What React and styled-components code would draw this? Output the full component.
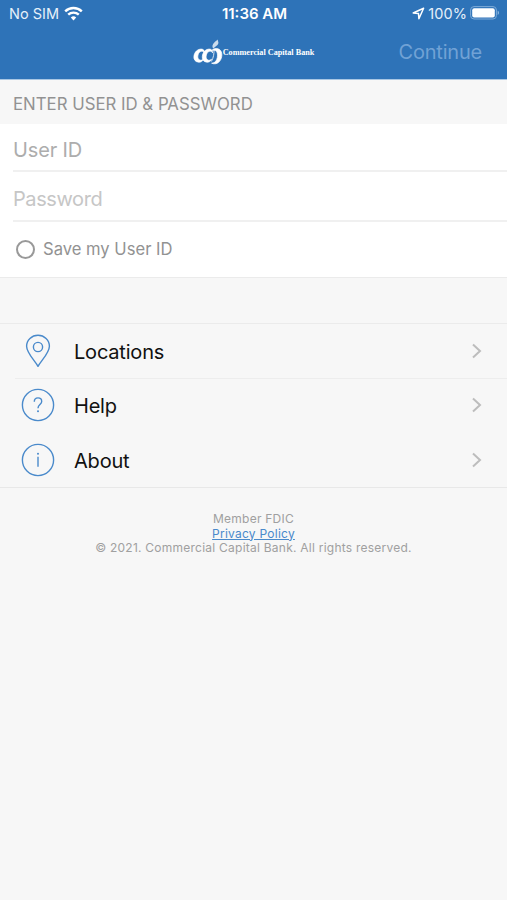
import React, { useState } from "react";
import styled, { createGlobalStyle } from "styled-components";

const GlobalStyle = createGlobalStyle`
  * {
    box-sizing: border-box;
  }
  body {
    margin: 0;
    background-color: #f7f7f7;
    font-family: Inter, "Liberation Sans", sans-serif;
  }
`;

const PinIcon = () => (
  <svg width="34" height="34" viewBox="0 0 34 34" fill="none" stroke="#4a8acb" strokeWidth="1.4">
    <path d="M17 32.3C14 27 5.6 18.8 5.6 12.2a11.4 11 0 0 1 22.8 0C28.4 18.8 20 27 17 32.3Z" strokeLinejoin="round" />
    <circle cx="17" cy="13" r="4.6" />
  </svg>
);

const HelpIcon = () => (
  <svg width="34" height="34" viewBox="0 0 34 34" fill="none" stroke="#4a8acb" strokeWidth="1.4">
    <circle cx="17" cy="17" r="15.6" />
    <path d="M13.3 13.8c0-2.4 1.5-3.9 3.7-3.9s3.7 1.4 3.7 3.5c0 3.1-3.7 3.3-3.7 6.8" />
    <circle cx="17" cy="23.2" r="1" fill="#4a8acb" stroke="none" />
  </svg>
);

const InfoIcon = () => (
  <svg width="34" height="34" viewBox="0 0 34 34" fill="none" stroke="#4a8acb" strokeWidth="1.4">
    <circle cx="17" cy="17" r="15.6" />
    <path d="M17 13.8v9.9" />
    <circle cx="17" cy="10.7" r="1" fill="#4a8acb" stroke="none" />
  </svg>
);

const WifiIcon = () => (
  <svg width="19" height="15" viewBox="0 0 19 15" fill="none" stroke="#fff" strokeWidth="2.4">
    <path d="M1.2 5.4a12 12 0 0 1 16.6 0" />
    <path d="M4.2 8.7a7.7 7.7 0 0 1 10.6 0" />
    <path d="M9.5 14.4l-2.7-2.8a3.9 3.9 0 0 1 5.4 0Z" fill="#fff" stroke="none" />
  </svg>
);

const ArrowIcon = () => (
  <svg width="13" height="13" viewBox="0 0 13 13" fill="none" stroke="#fff" strokeWidth="1.5">
    <path d="M11.6 1.2L1.2 6l5.3.6.4 5.2Z" strokeLinejoin="round" />
  </svg>
);

const BatteryIcon = () => (
  <svg width="30" height="14" viewBox="0 0 30 14">
    <rect x="0.6" y="0.6" width="25.8" height="12.4" rx="3.4" fill="none" stroke="#7eabd8" />
    <rect x="2.2" y="2.2" width="22.6" height="9.2" rx="2" fill="#fff" />
    <path d="M27.7 4.8c1.7.5 1.7 3.6 0 4.1Z" fill="#8fb8e0" />
  </svg>
);

const LogoMark = () => (
  <svg width="30" height="26" viewBox="0 0 30 26" fill="#fff">
    <g stroke="#fff" strokeWidth="0.7">
      <path d="M11.5 14.2c-.4-1.600-1.700-2.300-3.300-1.900-3.200.7-4.500 6.200-2.300 8.300 1.300 1.200 3.400.6 4.700-.5-.8 2-2.600 3.200-4.800 3.100C2.500 23 .6 20.600.9 17.500 1.300 13 4.700 10 8.300 10.100c2 .1 3.500 1.300 3.200 4.100Z" />
      <path d="M19.500 13.900c-.4-1.500-1.500-1.900-2.900-1.600-3.200.7-4.600 6.200-2.400 8.300 1.200 1.200 3 .7 4.300-.4-.7 2-2.300 3.100-4.400 3-3.300-.2-5.100-2.600-4.800-5.700.4-4.500 3.600-7.500 7.100-7.400 2 .1 3.300 1.300 3.100 3.800Z" />
      <path d="M19 11.300c2.200-2.300 6.400-2.400 8.500.2 2.500 3.200 1.300 9-1.800 11.700-1.900 1.700-4.700 2.100-7.100 1 2.600-.2 4.200-1.400 5.100-3.600 1.100-2.800 1.200-6.500-.2-8.200-1-1.200-2.900-1.200-4.500-1.100Z" />
    </g>
    <path d="M21 10.500c.2 4-.5 8.200-2.600 12" fill="none" stroke="#fff" strokeWidth="0.8" />
    <path d="M20.3 9.600c-2.200-3.200.3-6 4.500-9.100-.3 1.700 1.100 2.400.5 4-.7 2.200-3.200 3-5 5.100Z" fillOpacity="0.75" />
  </svg>
);

const Chevron = () => (
  <svg width="12" height="16" viewBox="0 0 12 16" fill="none" stroke="#bdbdbd" strokeWidth="2">
    <path d="M2 1.5L9 8l-7 6.5" />
  </svg>
);

const links = [
  { id: 1, label: "Locations", icon: <PinIcon />, divider: true },
  { id: 2, label: "Help", icon: <HelpIcon />, divider: false },
  { id: 3, label: "About", icon: <InfoIcon />, divider: false },
];

const App = () => {
  const [userId, setUserId] = useState("");
  const [password, setPassword] = useState("");
  const [save, setSave] = useState(false);

  return (
    <>
      <GlobalStyle />
      <Screen>
        <Header>
          <StatusBar>
            <StatusSide>
              <span>No SIM</span>
              <WifiIcon />
            </StatusSide>
            <Clock>11:36 AM</Clock>
            <StatusSide $end>
              <ArrowIcon />
              <span>100%</span>
              <BatteryIcon />
            </StatusSide>
          </StatusBar>
          <NavBar>
            <Brand>
              <LogoMark />
              <span>Commercial Capital Bank</span>
            </Brand>
            <ContinueButton>Continue</ContinueButton>
          </NavBar>
        </Header>
        <SectionTitle>ENTER USER ID &amp; PASSWORD</SectionTitle>
        <Form>
          <Field
            placeholder="User ID"
            $height={48}
            $hint="#adadad"
            $spacing="-0.15px"
            value={userId}
            onChange={(e) => setUserId(e.target.value)}
          />
          <Field
            type="password"
            placeholder="Password"
            $height={50}
            $hint="#c6c6c6"
            $spacing="-0.4px"
            value={password}
            onChange={(e) => setPassword(e.target.value)}
          />
          <SaveRow onClick={() => setSave(!save)}>
            <Radio $checked={save} />
            <span>Save my User ID</span>
          </SaveRow>
        </Form>
        <Menu>
          {links.map((el) => (
            <MenuRow key={el.id} $divider={el.divider}>
              <div className="icon">{el.icon}</div>
              <MenuLabel>{el.label}</MenuLabel>
              <Chevron />
            </MenuRow>
          ))}
        </Menu>
        <Footer>
          <span>Member FDIC</span>
          <a href="#privacy">Privacy Policy</a>
          <span>© 2021. Commercial Capital Bank. All rights reserved.</span>
        </Footer>
      </Screen>
    </>
  );
};

const Screen = styled.div`
  min-height: 900px;
  background-color: #f7f7f7;
`;

const Header = styled.header`
  height: 80px;
  background-color: #2e73b8;
  border-bottom: 1px solid #a9c7e4;
  color: white;
`;

const StatusBar = styled.div`
  display: grid;
  grid-template-columns: 1fr auto 1fr;
  align-items: center;
  height: 27px;
  padding: 0 7px 0 9px;
  font-size: 14.5px;
`;

const StatusSide = styled.div`
  display: flex;
  align-items: center;
  justify-content: ${(props) => (props.$end ? "flex-end" : "flex-start")};
  gap: ${(props) => (props.$end ? "3px" : "5px")};
  color: #e6f0fa;
  letter-spacing: ${(props) => (props.$end ? "0.1px" : "0")};

  > svg {
    flex-shrink: 0;
    margin-top: -1px;
  }
`;

const Clock = styled.div`
  font-size: 15px;
  font-weight: 600;
`;

const NavBar = styled.div`
  display: grid;
  grid-template-columns: 1fr auto 1fr;
  align-items: center;
  height: 50px;
  padding: 0 25px;
`;

const Brand = styled.div`
  grid-column: 2;
  display: flex;
  align-items: center;
  font-family: "Liberation Serif", serif;
  font-size: 8.2px;
  font-weight: 700;
  white-space: nowrap;
`;

const ContinueButton = styled.button`
  justify-self: end;
  padding: 0;
  border: none;
  background: none;
  color: #71a2d5;
  font-family: inherit;
  font-size: 20px;
  letter-spacing: -0.2px;
  cursor: pointer;
`;

const SectionTitle = styled.div`
  display: flex;
  align-items: center;
  height: 44px;
  padding: 4px 0 0 13px;
  color: #929292;
  font-size: 16.8px;
`;

const Form = styled.div`
  height: 154px;
  padding-left: 13px;
  background-color: white;
  border-bottom: 1px solid #ebebeb;
`;

const Field = styled.input`
  display: block;
  width: 100%;
  height: ${(props) => props.$height}px;
  padding: 5px 0 0;
  border: none;
  border-bottom: 2px solid #f0f0f0;
  outline: none;
  background: none;
  color: #333;
  font-family: inherit;
  font-size: 20px;
  letter-spacing: ${(props) => props.$spacing};

  &::placeholder {
    color: ${(props) => props.$hint};
    opacity: 1;
  }
`;

const SaveRow = styled.div`
  display: flex;
  align-items: center;
  gap: 8px;
  height: 54px;
  padding-left: 3px;
  color: #929292;
  font-size: 16.6px;
  cursor: pointer;
`;

const Radio = styled.div`
  width: 19px;
  height: 19px;
  border: 2px solid #999;
  border-radius: 50%;
  background-color: ${(props) => (props.$checked ? "#2e73b8" : "transparent")};
`;

const Menu = styled.div`
  margin-top: 45px;
  height: 165px;
  border-top: 1px solid #ebebeb;
  border-bottom: 1px solid #e8e8e8;
`;

const MenuRow = styled.div`
  display: flex;
  align-items: center;
  height: 54.5px;
  margin-left: 15px;
  padding: 0 24px 0 6px;
  border-bottom: 1px solid ${(props) => (props.$divider ? "#ededed" : "transparent")};
  cursor: pointer;

  .icon {
    display: flex;
    width: 34px;
    margin-right: 19px;
  }
`;

const MenuLabel = styled.span`
  flex: 1;
  padding-top: 2px;
  color: #111;
  font-size: 20px;
  letter-spacing: -0.2px;
`;

const Footer = styled.footer`
  display: flex;
  flex-direction: column;
  align-items: center;
  padding-top: 24px;
  color: #a0a0a0;
  font-size: 12px;
  line-height: 14.5px;
  letter-spacing: 0.24px;

  a {
    color: #4a8acb;
  }
`;

export default App;
